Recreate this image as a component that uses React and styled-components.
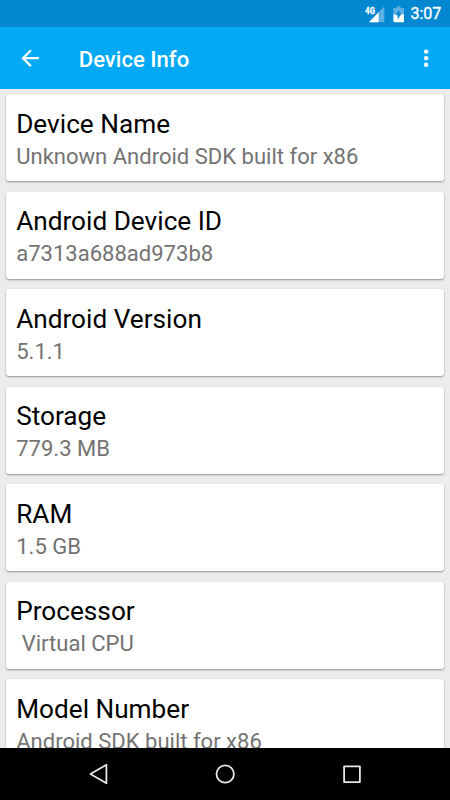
import React from 'react';
import styled, { createGlobalStyle } from 'styled-components';

const GlobalStyle = createGlobalStyle`
  * {
    box-sizing: border-box;
  }

  body {
    margin: 0;
    background: #ececec;
    font-family: Roboto, sans-serif;
    overflow: hidden;
  }
`;

const Screen = styled.div`
  width: 450px;
  height: 800px;
  display: flex;
  flex-direction: column;
  overflow: hidden;
  background: #ececec;
`;

const StatusBar = styled.div`
  height: 27.3px;
  flex: none;
  display: flex;
  align-items: center;
  justify-content: flex-end;
  padding-right: 9px;
  background: #0288d1;
  color: #fff;

  .battery {
    margin: 0 6.5px 0 8.5px;
  }

  .clock {
    width: 30.5px;
    font-size: 16px;
    line-height: 28px;
    font-weight: 400;
    -webkit-text-stroke: 0.35px #fff;
  }
`;

const Toolbar = styled.header`
  height: 61.3px;
  flex: none;
  display: flex;
  align-items: center;
  padding: 0 11px 0 17.2px;
  background: #03a9f4;
  color: #fff;

  h1 {
    flex: 1;
    margin: 3px 0 0 35.3px;
    font-size: 22.1px;
    font-weight: 500;
  }
`;

const IconButton = styled.button`
  display: flex;
  padding: 0;
  border: none;
  background: none;
  color: inherit;
`;

const CardList = styled.main`
  flex: 1;
  min-height: 0;
  overflow: hidden;
  display: flex;
  flex-direction: column;
  gap: 10.4px;
  padding: 5.7px 5.8px 0 5.5px;
`;

const Card = styled.section`
  flex: none;
  height: 87.1px;
  padding: 12.7px 10.7px 0;
  border-radius: 3px;
  background: #fff;
  box-shadow: 0 1px 2px rgba(0, 0, 0, 0.38);

  h2 {
    margin: 0;
    font-size: 26.2px;
    line-height: 35px;
    font-weight: 400;
    color: #000;
  }

  p {
    margin: 0;
    font-size: 22.04px;
    line-height: 30px;
    color: #737373;
    white-space: pre;
  }
`;

const NavBar = styled.nav`
  height: 52.5px;
  flex: none;
  display: flex;
  align-items: center;
  justify-content: center;
  gap: 100.5px;
  background: #000;
  color: #e6e6e6;
`;

const info = [
  { label: 'Device Name', value: 'Unknown Android SDK built for x86' },
  { label: 'Android Device ID', value: 'a7313a688ad973b8' },
  { label: 'Android Version', value: '5.1.1' },
  { label: 'Storage', value: '779.3 MB' },
  { label: 'RAM', value: '1.5 GB' },
  { label: 'Processor', value: ' Virtual CPU' },
  { label: 'Model Number', value: 'Android SDK built for x86' },
];

const SignalIcon = () => (
  <svg width="20" height="18" viewBox="0 0 20 18">
    <path d="M19.4 1.3v15.9H4z" fill="#fff" fillOpacity="0.35" />
    <path d="M13.6 7.3v9.9H4z" fill="#fff" />
    <text x="0.3" y="8.9" fill="#fff" stroke="#fff" strokeWidth="0.3" fontSize="9.6" fontWeight="700" textLength="9.5" lengthAdjust="spacingAndGlyphs">4G</text>
  </svg>
);

const BatteryIcon = () => (
  <svg className="battery" width="11" height="18" viewBox="0 0 11 18">
    <path d="M3.5 1.3h4v1.6H11V9.3H.4V2.9h3.1z" fill="#fff" fillOpacity="0.35" />
    <path d="M.4 9.3H11v7q0 .9-.9.9H1.3q-.9 0-.9-.9z" fill="#fff" />
    <path d="M6.3 4.6v4h2.2l-3.8 6.2v-4.5H2.5z" fill="#0288d1" />
  </svg>
);

const App = () => (
  <>
    <GlobalStyle />
    <Screen>
      <StatusBar>
        <SignalIcon />
        <BatteryIcon />
        <span className="clock">3:07</span>
      </StatusBar>

      <Toolbar>
        <IconButton aria-label="Back">
          <svg width="26.25" height="26.25" viewBox="0 0 24 24" fill="currentColor">
            <path d="M20 11H7.83l5.59-5.59L12 4l-8 8 8 8 1.41-1.41L7.83 13H20z" />
          </svg>
        </IconButton>
        <h1>Device Info</h1>
        <IconButton aria-label="More options">
          <svg width="26.25" height="26.25" viewBox="0 0 24 24" fill="currentColor">
            <circle cx="12" cy="6" r="2" />
            <circle cx="12" cy="12" r="2" />
            <circle cx="12" cy="18" r="2" />
          </svg>
        </IconButton>
      </Toolbar>

      <CardList>
        {info.map(item => (
          <Card key={item.label}>
            <h2>{item.label}</h2>
            <p>{item.value}</p>
          </Card>
        ))}
      </CardList>

      <NavBar>
        <IconButton aria-label="Back">
          <svg width="26" height="26" viewBox="0 0 26 26" fill="none" stroke="currentColor" strokeWidth="1.8" strokeLinejoin="round">
            <path d="M20.4 3.8v18.4L4.4 13z" />
          </svg>
        </IconButton>
        <IconButton aria-label="Home">
          <svg width="26" height="26" viewBox="0 0 26 26" fill="none" stroke="currentColor" strokeWidth="1.8">
            <circle cx="13.2" cy="13" r="8.7" />
          </svg>
        </IconButton>
        <IconButton aria-label="Recent apps">
          <svg width="26" height="26" viewBox="0 0 26 26" fill="none" stroke="currentColor" strokeWidth="1.8" strokeLinejoin="round">
            <rect x="5.1" y="5.3" width="15.8" height="15.8" />
          </svg>
        </IconButton>
      </NavBar>
    </Screen>
  </>
);

export default App;
